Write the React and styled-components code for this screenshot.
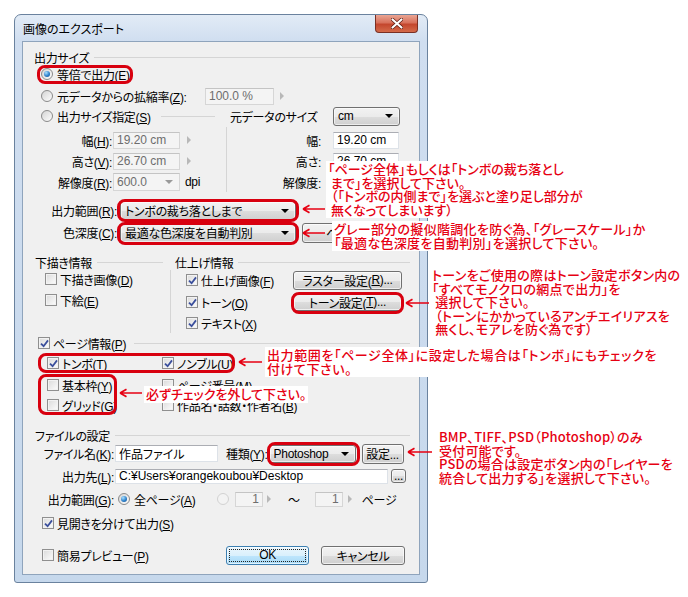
import React from 'react';
import styled, { createGlobalStyle, css } from 'styled-components';

const GlobalStyle = createGlobalStyle`
  html, body { margin: 0; padding: 0; background: #fff; }
  body {
    font-family: "Liberation Sans", "Noto Sans CJK JP", sans-serif;
    font-size: 12px;
    font-feature-settings: "palt";
    color: #000;
  }
`;

const RED = '#e60012';
const BTN_BG = 'linear-gradient(180deg, #f2f2f2 0%, #ebebeb 50%, #dddddd 51%, #cfcfcf 100%)';

const Page = styled.div`
  position: relative;
  width: 688px;
  height: 597px;
  padding: 14px;
  box-sizing: border-box;
  overflow: hidden;
`;

const Window = styled.div`
  width: 414px;
  height: 569px;
  box-sizing: border-box;
  border: 1px solid #6a829e;
  border-radius: 7px 7px 3px 3px;
  background: linear-gradient(180deg, #e2ebf6 0%, #d0def0 26px, #c6d8ec 100%);
  display: flex;
  flex-direction: column;
  padding: 0 7px 7px;
`;

const TitleBar = styled.div`
  height: 26px;
  display: flex;
  align-items: flex-start;
`;

const Title = styled.div`
  flex: 1;
  padding-left: 1px;
  line-height: 27px;
  font-family: "Noto Sans CJK JP", sans-serif;
  font-size: 12px;
`;

const CloseBtn = styled.div`
  width: 43px;
  height: 18px;
  margin-right: 2px;
  box-sizing: border-box;
  border: 1px solid #7a3024;
  border-top: none;
  border-radius: 0 0 4px 4px;
  background: linear-gradient(180deg, #eaa593 0%, #d8715c 45%, #c4472e 55%, #d46a4a 100%);
  display: flex;
  align-items: center;
  justify-content: center;
`;

const Client = styled.div`
  flex: 1;
  background: #f0f0f0;
  border: 1px solid #8fa4bc;
  padding: 9px 9px 0 11px;
  letter-spacing: -0.3px;
`;

const GroupHead = styled.div`
  display: flex;
  align-items: center;
  height: ${p => p.$h || 14}px;
  margin-top: ${p => p.$mt || 0}px;
  padding-left: ${p => p.$pl || 0}px;
  margin-right: ${p => p.$mr || 0}px;
  white-space: nowrap;
  &::after {
    content: '';
    flex: 1;
    border-top: 1px solid #d5d5d5;
    margin-left: 5px;
  }
`;

const Row = styled.div`
  display: flex;
  align-items: center;
  height: ${p => p.$h || 20}px;
  margin-top: ${p => p.$mt || 0}px;
  padding-left: ${p => p.$pl || 0}px;
  padding-right: ${p => p.$pr || 0}px;
  white-space: nowrap;
`;

const Rule = styled.div`
  flex: 1;
  border-top: 1px solid #d5d5d5;
  margin: 0 ${p => p.$mr || 0}px 0 ${p => p.$ml || 6}px;
`;

const Cols = styled.div`
  display: grid;
  grid-template-columns: ${p => p.$cols};
  margin-top: ${p => p.$mt || 0}px;
`;

const SideBox = styled.div`
  border-left: 1px solid #d5d5d5;
  margin-top: ${p => p.$mt || 0}px;
  padding-top: ${p => p.$pt || 0}px;
`;

const Label = styled.span`
  flex: none;
  width: ${p => (p.$w ? `${p.$w}px` : 'auto')};
  text-align: ${p => (p.$left ? 'left' : 'right')};
  margin-left: ${p => p.$ml || 0}px;
  margin-right: ${p => p.$mr || 0}px;
  flex-grow: ${p => (p.$grow ? 1 : 0)};
`;

const Mn = styled.span`
  text-decoration: underline;
`;

const Option = styled.div`
  display: flex;
  align-items: center;
  gap: ${p => p.$gap || 4}px;
  flex: ${p => (p.$grow ? 1 : 'none')};
  width: ${p => (p.$w ? `${p.$w}px` : 'auto')};
  margin-left: ${p => p.$ml || 0}px;
`;

const RadioMark = styled.span`
  flex: none;
  width: 12px;
  height: 12px;
  box-sizing: border-box;
  border-radius: 50%;
  border: 1px solid ${p => (p.$disabled ? '#d2d2d2' : '#8a8a8a')};
  background: ${p => (p.$disabled ? '#f3f3f3' : 'linear-gradient(135deg, #d4d4d4, #fdfdfd)')};
  display: inline-flex;
  align-items: center;
  justify-content: center;
  ${p => p.$checked && css`
    &::after {
      content: '';
      width: 6px;
      height: 6px;
      border-radius: 50%;
      background: radial-gradient(circle at 35% 30%, #a8e0ff 0, #2f82cb 55%, #0c4a8e 100%);
    }
  `}
`;

const CheckFrame = styled.span`
  flex: none;
  width: 12px;
  height: 12px;
  box-sizing: border-box;
  border: 1px solid #8f8f8f;
  background: linear-gradient(135deg, #dadada, #fdfdfd);
  box-shadow: inset 0 0 0 1px #f2f2f2;
  display: inline-flex;
  align-items: center;
  justify-content: center;
`;

const Field = styled.div`
  flex: none;
  width: ${p => p.$w}px;
  height: ${p => p.$h || 17}px;
  box-sizing: border-box;
  margin-left: ${p => p.$ml || 0}px;
  border: 1px solid ${p => (p.$disabled ? '#d6d6d6' : '#dde2e8')};
  border-top-color: ${p => (p.$disabled ? '#c4c4c4' : '#abadb3')};
  background: ${p => (p.$disabled ? '#f4f4f4' : '#fff')};
  color: ${p => (p.$disabled ? '#6d6d6d' : '#000')};
  display: flex;
  align-items: center;
  justify-content: ${p => (p.$right ? 'flex-end' : 'space-between')};
  padding: 0 3px;
  overflow: hidden;
  white-space: nowrap;
  letter-spacing: 0;
`;

const DropMark = styled.span`
  flex: none;
  width: 0;
  height: 0;
  margin-right: ${p => p.$mr || 0}px;
  border-top: 4px solid ${p => p.$c || '#000'};
  border-left: 4px solid transparent;
  border-right: 4px solid transparent;
`;

const SpinArrow = styled.span`
  flex: none;
  width: 0;
  height: 0;
  margin-left: ${p => p.$ml || 6}px;
  border-left: 4px solid #b8b8b8;
  border-top: 4px solid transparent;
  border-bottom: 4px solid transparent;
`;

const Combo = styled.div`
  flex: none;
  width: ${p => p.$w}px;
  height: ${p => p.$h || 20}px;
  box-sizing: border-box;
  margin-left: ${p => p.$ml || 0}px;
  margin-right: ${p => p.$mr || 0}px;
  border: 1px solid #707070;
  border-radius: 3px;
  background: ${BTN_BG};
  box-shadow: inset 0 0 0 1px rgba(255, 255, 255, 0.6);
  display: flex;
  align-items: center;
  justify-content: space-between;
  padding: 0 4px 0 4px;
  white-space: nowrap;
  overflow: hidden;
`;

const Button = styled.div`
  flex: none;
  width: ${p => p.$w}px;
  height: ${p => p.$h || 20}px;
  box-sizing: border-box;
  margin-left: ${p => p.$ml || 0}px;
  margin-right: ${p => p.$mr || 0}px;
  border: 1px solid ${p => (p.$primary ? '#3c7fb1' : '#707070')};
  border-radius: 3px;
  background: ${p => (p.$primary
    ? 'linear-gradient(180deg, #eaf6fd 0%, #d9f0fc 50%, #bee6fd 51%, #a7d9f5 100%)'
    : BTN_BG)};
  box-shadow: inset 0 0 0 1px rgba(255, 255, 255, 0.65);
  display: flex;
  align-items: center;
  justify-content: center;
  white-space: nowrap;
  overflow: hidden;
  ${p => p.$primary && css`
    outline: 1px dotted #222;
    outline-offset: -4px;
  `}
`;

const Note = styled.div`
  position: absolute;
  left: ${p => p.$x}px;
  top: ${p => p.$y}px;
  padding: 1px 2px 2px;
  background: ${p => (p.$bg ? '#fff' : 'transparent')};
  color: ${RED};
  font-family: "Noto Sans CJK JP", sans-serif;
  font-size: 13px;
  line-height: 13.6px;
  font-weight: 500;
  font-feature-settings: "palt";
  letter-spacing: ${p => p.$ls || 0}px;
  white-space: pre;
`;

const Ring = styled.div`
  position: absolute;
  left: ${p => p.$x}px;
  top: ${p => p.$y}px;
  width: ${p => p.$w}px;
  height: ${p => p.$h}px;
  box-sizing: border-box;
  border: 3px solid #d8000f;
  border-radius: 8px;
`;

const ArrowSvg = styled.svg`
  position: absolute;
  left: ${p => p.$x}px;
  top: ${p => p.$y - 5}px;
`;

const mn = (t, k, tail = '') => (
  <>
    {t}(<Mn>{k}</Mn>){tail}
  </>
);

function Radio({ checked, disabled, children, ...rest }) {
  return (
    <Option {...rest}>
      <RadioMark $checked={checked} $disabled={disabled} />
      {children && <span>{children}</span>}
    </Option>
  );
}

function Check({ checked, children, ...rest }) {
  return (
    <Option $gap={3} {...rest}>
      <CheckFrame>
        {checked && (
          <svg width="9" height="9" viewBox="0 0 9 9">
            <path d="M1 4.6 L3.6 7.2 L8 1.4" fill="none" stroke="#3b4f9c" strokeWidth="1.8" />
          </svg>
        )}
      </CheckFrame>
      <span>{children}</span>
    </Option>
  );
}

function Arrow({ x, y, w }) {
  return (
    <ArrowSvg $x={x} $y={y} width={w} height={10} viewBox={`0 0 ${w} 10`}>
      <path d={`M1 5H${w - 1}M1 5L7.5 1.2M1 5L7.5 8.8`} stroke={RED} strokeWidth="1.7" fill="none" />
    </ArrowSvg>
  );
}

export default function App() {
  return (
    <Page>
      <GlobalStyle />
      <Window>
        <TitleBar>
          <Title>画像のエクスポート</Title>
          <CloseBtn>
            <svg width="12" height="11" viewBox="0 0 12 11">
              <path d="M1.5 1.5L10.5 9.5M10.5 1.5L1.5 9.5" stroke="#5a1a10" strokeWidth="3.6" strokeLinecap="round" />
              <path d="M1.5 1.5L10.5 9.5M10.5 1.5L1.5 9.5" stroke="#fff" strokeWidth="2.2" strokeLinecap="round" />
            </svg>
          </CloseBtn>
        </TitleBar>

        <Client>
          <GroupHead $h={13}>出力サイズ</GroupHead>
          <Row $pl={7}>
            <Radio checked>{mn('等倍で出力', 'E')}</Radio>
          </Row>
          <Row $pl={7} $mt={2}>
            <Radio $w={164}>{mn('元データからの拡縮率', 'Z', ':')}</Radio>
            <Field $w={69} $disabled>100.0 %</Field>
            <SpinArrow $ml={6} />
          </Row>

          <Cols $cols="192px 184px">
            <div>
              <Row $pl={7}>
                <Radio>{mn('出力サイズ指定', 'S')}</Radio>
                <Rule $ml={10} $mr={11} />
              </Row>
              <Row $mt={4}>
                <Label $w={78} $mr={1}>{mn('幅', 'H', ':')}</Label>
                <Field $w={67} $disabled>19.20 cm</Field>
                <SpinArrow $ml={7} />
              </Row>
              <Row $mt={1}>
                <Label $w={78} $mr={1}>{mn('高さ', 'V', ':')}</Label>
                <Field $w={67} $disabled>26.70 cm</Field>
                <SpinArrow $ml={7} />
              </Row>
              <Row $mt={1}>
                <Label $w={78} $mr={1}>{mn('解像度', 'R', ':')}</Label>
                <Field $w={67} $disabled $h={18}>
                  <span>600.0</span>
                  <DropMark $c="#9a9a9a" $mr={3} />
                </Field>
                <Label $ml={5}>dpi</Label>
              </Row>
            </div>
            <div>
              <Row $pl={4}>
                <Label $left $grow>元データのサイズ</Label>
                <Combo $w={67} $h={19} $mr={10}>
                  <span>cm</span>
                  <DropMark $mr={2} />
                </Combo>
              </Row>
              <SideBox $mt={1} $pt={3}>
                <Row>
                  <Label $w={94} $mr={12}>幅:</Label>
                  <Field $w={66}>19.20 cm</Field>
                </Row>
                <Row $mt={1}>
                  <Label $w={94} $mr={12}>高さ:</Label>
                  <Field $w={66}>26.70 cm</Field>
                </Row>
                <Row $mt={1}>
                  <Label $w={94} $mr={12}>解像度:</Label>
                  <Field $w={66}>600.0 dpi</Field>
                </Row>
              </SideBox>
            </div>
          </Cols>

          <Row $mt={8} $h={21}>
            <Label $w={83} $mr={3}>{mn('出力範囲', 'R', ':')}</Label>
            <Combo $w={176}>
              <span>トンボの裁ち落としまで</span>
              <DropMark $mr={2} />
            </Combo>
          </Row>
          <Row $mt={1} $h={21}>
            <Label $w={83} $mr={3}>{mn('色深度', 'C', ':')}</Label>
            <Combo $w={176}>
              <span>最適な色深度を自動判別</span>
              <DropMark $mr={2} />
            </Combo>
            <Button $w={104} $ml={6}>への設定...</Button>
          </Row>

          <Cols $cols="136px 240px" $mt={12}>
            <div>
              <GroupHead $pl={1} $mr={7}>下描き情報</GroupHead>
              <Row $pl={11}>
                <Check>{mn('下描き画像', 'D')}</Check>
              </Row>
              <Row $pl={11} $mt={1}>
                <Check>{mn('下絵', 'E')}</Check>
              </Row>
            </div>
            <div>
              <GroupHead $pl={5}>仕上げ情報</GroupHead>
              <SideBox $mt={1}>
                <Row $pl={15}>
                  <Check $grow checked>{mn('仕上げ画像', 'F')}</Check>
                  <Button $w={109} $h={19} $mr={8}>ラスター設定({<Mn>R</Mn>})...</Button>
                </Row>
                <Row $pl={15} $mt={2}>
                  <Check $grow checked>{mn('トーン', 'O')}</Check>
                  <Button $w={109} $h={18} $mr={8}>トーン設定({<Mn>T</Mn>})...</Button>
                </Row>
                <Row $pl={15} $mt={1}>
                  <Check checked>{mn('テキスト', 'X')}</Check>
                </Row>
              </SideBox>
            </div>
          </Cols>

          <Row $pl={4}>
            <Check checked>{mn('ページ情報', 'P')}</Check>
            <Rule $ml={8} />
          </Row>
          <Row $pl={13}>
            <Check checked $w={115}>{mn('トンボ', 'T')}</Check>
            <Check checked>{mn('ノンブル', 'U')}</Check>
          </Row>
          <Row $pl={13} $mt={2}>
            <Check $w={115}>{mn('基本枠', 'Y')}</Check>
            <Check>{mn('ページ番号', 'M')}</Check>
          </Row>
          <Row $pl={13}>
            <Check $w={115}>{mn('グリッド', 'G')}</Check>
            <Check>{mn('作品名・話数・作者名', 'B')}</Check>
          </Row>

          <GroupHead $mt={13} $pl={1}>ファイルの設定</GroupHead>
          <Row $mt={1} $h={21}>
            <Label $w={80} $mr={1}>{mn('ファイル名', 'K', ':')}</Label>
            <Field $w={103}>作品ファイル</Field>
            <Label $ml={8}>{mn('種類', 'Y', ':')}</Label>
            <Combo $w={87} $h={18} $ml={1}>
              <span>Photoshop</span>
              <DropMark $mr={2} />
            </Combo>
            <Button $w={42} $ml={6}>設定...</Button>
          </Row>
          <Row $mt={2}>
            <Label $w={80} $mr={1}>{mn('出力先', 'L', ':')}</Label>
            <Field $w={273} $h={15}>C:¥Users¥orangekoubou¥Desktop</Field>
            <Button $w={15} $h={14} $ml={3}>...</Button>
          </Row>
          <Row $mt={3}>
            <Label $w={80}>{mn('出力範囲', 'G', ':')}</Label>
            <Radio checked $w={99} $ml={4}>{mn('全ページ', 'A')}</Radio>
            <Radio disabled />
            <Field $w={28} $h={15} $ml={6} $right $disabled>1</Field>
            <SpinArrow $ml={4} />
            <Label $ml={17}>〜</Label>
            <Field $w={28} $h={15} $ml={15} $right $disabled>1</Field>
            <SpinArrow $ml={5} />
            <Label $ml={10}>ページ</Label>
          </Row>
          <Row $mt={4} $pl={8}>
            <Check checked>{mn('見開きを分けて出力', 'S')}</Check>
          </Row>
          <Row $mt={12} $pl={8} $pr={5}>
            <Check $grow>{mn('簡易プレビュー', 'P')}</Check>
            <Button $w={83} $h={19} $primary>OK</Button>
            <Button $w={84} $h={19} $ml={12}>キャンセル</Button>
          </Row>
        </Client>
      </Window>

      <Ring $x={37} $y={65} $w={96} $h={19} />
      <Ring $x={117} $y={199} $w={182} $h={23} />
      <Ring $x={117} $y={222} $w={182} $h={23} />
      <Ring $x={291} $y={292} $w={113} $h={22} />
      <Ring $x={38} $y={353} $w={197} $h={20} />
      <Ring $x={38} $y={374} $w={79} $h={41} />
      <Ring $x={267} $y={442} $w={93} $h={24} />

      <Arrow x={302} y={209} w={24} />
      <Arrow x={302} y={233} w={24} />
      <Arrow x={405} y={303} w={25} />
      <Arrow x={238} y={362} w={25} />
      <Arrow x={119} y={393} w={24} />
      <Arrow x={407} y={452} w={26} />

      <Note $x={326} $y={161} $bg>
        {'「ページ全体」もしくは「トンボの裁ち落とし\n まで」を選択して下さい。\n （「トンボの内側まで」を選ぶと塗り足し部分が\n 無くなってしまいます）'}
      </Note>
      <Note $x={332} $y={221} $bg $ls={0.3}>
        {'グレー部分の擬似階調化を防ぐ為、「グレースケール」か\n「最適な色深度を自動判別」を選択して下さい。'}
      </Note>
      <Note $x={430} $y={267} $ls={0.3}>
        {'トーンをご使用の際はトーン設定ボタン内の\n「すべてモノクロの網点で出力」を\n 選択して下さい。\n （トーンにかかっているアンチエイリアスを\n 無くし、モアレを防ぐ為です）'}
      </Note>
      <Note $x={265} $y={347} $bg $ls={0.6}>
        {'出力範囲を「ページ全体」に設定した場合は「トンボ」にもチェックを\n付けて下さい。'}
      </Note>
      <Note $x={144} $y={386} $bg>
        {'必ずチェックを外して下さい。'}
      </Note>
      <Note $x={437} $y={429} $ls={0.2}>
        {'BMP、TIFF、PSD（Photoshop）のみ\n受付可能です。\nPSDの場合は設定ボタン内の「レイヤーを\n統合して出力する」を選択して下さい。'}
      </Note>
    </Page>
  );
}
